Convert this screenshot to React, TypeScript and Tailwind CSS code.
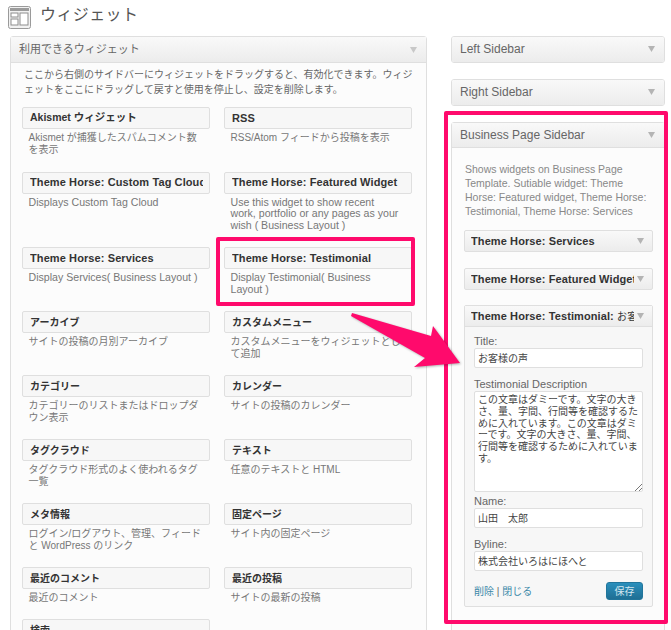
import React from "react";

const FONT = "[font-family:'Liberation_Sans','Noto_Sans_CJK_JP',sans-serif]";

const available: [string, string, number][] = [
  ["Akismet ウィジェット", "Akismet が捕獲したスパムコメント数を表示", 64.5],
  ["RSS", "RSS/Atom フィードから投稿を表示", 64.5],
  ["Theme Horse: Custom Tag Cloud", "Displays Custom Tag Cloud", 75.5],
  ["Theme Horse: Featured Widget", "Use this widget to show recent\nwork, portfolio or any pages as your\nwish ( Business Layout )", 75.5],
  ["Theme Horse: Services", "Display Services( Business Layout )", 64],
  ["Theme Horse: Testimonial", "Display Testimonial( Business\nLayout )", 64],
  ["アーカイブ", "サイトの投稿の月別アーカイブ", 64],
  ["カスタムメニュー", "カスタムメニューをウィジェットとして追加", 64],
  ["カテゴリー", "カテゴリーのリストまたはドロップダウン表示", 64],
  ["カレンダー", "サイトの投稿のカレンダー", 64],
  ["タグクラウド", "タグクラウド形式のよく使われるタグ一覧", 64],
  ["テキスト", "任意のテキストと HTML", 64],
  ["メタ情報", "ログイン/ログアウト、管理、フィードと WordPress のリンク", 64],
  ["固定ページ", "サイト内の固定ページ", 64],
  ["最近のコメント", "最近のコメント", 52],
  ["最近の投稿", "サイトの最新の投稿", 52],
  ["検索", "", 52],
];

const isLatin = (s: string) => /^[\x00-\x7F]+$/.test(s);

function Caret({ className = "text-[#b4b4b4]" }: { className?: string }) {
  return (
    <svg width="7" height="6" viewBox="0 0 7 6" className={className}>
      <path d="M0 0h7L3.500 6z" fill="currentColor" />
    </svg>
  );
}

function SideHeader({ title, open = false }: { title: string; open?: boolean }) {
  return (
    <div
      className={`flex h-[25px] items-center justify-between bg-gradient-to-b from-[#f9f9f9] to-[#ececec] pb-[1px] pl-[8px] pr-[9px] text-[12px] text-[#666] ${
        open ? "border-b border-[#dfdfdf]" : ""
      }`}
    >
      <span>{title}</span>
      <Caret />
    </div>
  );
}

function ClosedWidget({ title }: { title: string }) {
  return (
    <div className="flex h-[22px] items-center justify-between rounded-[2px] border border-[#dfdfdf] bg-gradient-to-b from-[#f9f9f9] to-[#ececec] pl-[6px] pr-[8px]">
      <span className="w-[163px] overflow-hidden whitespace-nowrap text-[11px] font-bold tracking-[0.1px] text-[#333]">{title}</span>
      <Caret />
    </div>
  );
}

function Field({ label, value, className }: { label: string; value: string; className: string }) {
  return (
    <div className={className}>
      <div className="h-[13px] text-[11px] leading-[13px] text-[#666]">{label}</div>
      <div className="flex h-[20px] items-center rounded-[2px] border border-[#dfdfdf] bg-white pl-[3px] text-[10px] text-[#444]">
        {value}
      </div>
    </div>
  );
}

export default function App() {
  return (
    <div className={`relative h-[630px] w-[671px] overflow-hidden bg-white ${FONT}`}>
      <div className="flex h-[36px] items-start pl-[8px] pt-[5px]">
        <svg width="23" height="23" viewBox="0 0 23 23" className="mt-[1px]">
          <rect x="0.5" y="0.500" width="22" height="22" rx="2" fill="#f1f1f1" stroke="#9a9a9a" />
          <rect x="2" y="2" width="19" height="3" fill="#9b9b9b" />
          <rect x="3" y="7" width="7" height="4" fill="#fff" stroke="#8e8e8e" />
          <rect x="3" y="13" width="7" height="6" fill="#fff" stroke="#8e8e8e" />
          <rect x="12" y="7" width="8" height="12" fill="#fff" stroke="#8e8e8e" />
        </svg>
        <h1 className="ml-[9px] text-[16px] font-normal leading-[20px] tracking-[0.4px] text-[#555]">ウィジェット</h1>
      </div>

      <div className="flex items-start pl-[10px]">
        <section className="h-[700px] w-[417px] rounded-[3px] border border-[#dfdfdf] bg-[#fcfcfc]">
          <div className="flex h-[26px] items-center justify-between border-b border-[#dfdfdf] bg-gradient-to-b from-[#f9f9f9] to-[#ececec] pl-[8px] pr-[9px] text-[11px] text-[#666]">
            <span>利用できるウィジェット</span>
            <Caret className="text-[#c8c8c8]" />
          </div>
          <p className="ml-[13px] mt-[4px] h-[30px] w-[392px] text-[10px] leading-[15px] text-[#666]">
            ここから右側のサイドバーにウィジェットをドラッグすると、有効化できます。ウィジェットをここにドラッグして戻すと使用を停止し、設定を削除します。
          </p>
          <div className="ml-[11px] mt-[10px] grid w-[391px] grid-cols-[188px_188px] gap-x-[14px]">
            {available.map(([title, desc, h]) => (
              <div key={title} style={{ height: h }}>
                <div className="flex h-[22px] items-center rounded-[2px] border border-[#dfdfdf] bg-[#f7f7f7] pl-[7px] pr-[6px]">
                  <span
                    className={`block w-full overflow-hidden font-bold whitespace-nowrap text-[#333] ${
                      isLatin(title) ? "text-[11px] tracking-[0.1px]" : /[A-Za-z]/.test(title) ? "text-[10.5px]" : "text-[10px]"
                    }`}
                  >
                    {title}
                  </span>
                </div>
                <p
                  className={`mt-[3px] whitespace-pre-line px-[6.5px] leading-[11.7px] text-[#777] ${
                    isLatin(desc) ? "text-[10.6px]" : "text-[10px]"
                  }`}
                >
                  {desc}
                </p>
              </div>
            ))}
          </div>
        </section>

        <aside className="ml-[24px] w-[214px]">
          <div className="mb-[16px] overflow-hidden rounded-[3px] border border-[#dfdfdf]">
            <SideHeader title="Left Sidebar" />
          </div>
          <div className="mb-[16px] overflow-hidden rounded-[3px] border border-[#dfdfdf]">
            <SideHeader title="Right Sidebar" />
          </div>
          <div className="h-[520px] rounded-[3px] border border-[#dfdfdf] bg-[#fcfcfc]">
            <SideHeader title="Business Page Sidebar" open />
            <p className="ml-[13px] mt-[14px] w-[189px] text-[10.5px] leading-[14px] text-[#888]">
              Shows widgets on Business Page Template. Sutiable widget: Theme Horse: Featured widget, Theme Horse: Testimonial, Theme Horse: Services
            </p>
            <div className="ml-[12px] mt-[12px] w-[189px]">
              <ClosedWidget title="Theme Horse: Services" />
              <div className="mt-[16px]">
                <ClosedWidget title="Theme Horse: Featured Widget" />
              </div>
              <div className="mt-[15px] h-[302px] rounded-[2px] border border-[#dfdfdf] bg-[#f7f7f7]">
                <div className="flex h-[21px] items-center justify-between border-b border-[#dfdfdf] bg-gradient-to-b from-[#f9f9f9] to-[#ececec] pl-[6px] pr-[8px]">
                  <span className="w-[163px] overflow-hidden whitespace-nowrap text-[11px] font-bold tracking-[0.1px] text-[#333]">
                    Theme Horse: Testimonial: <span className="text-[10px] font-normal">お客様の声</span>
                  </span>
                  <Caret />
                </div>
                <div className="px-[9px] pt-[8px]">
                  <Field label="Title:" value="お客様の声" className="" />
                  <div className="mt-[10px] h-[13px] text-[11px] leading-[13px] text-[#666]">Testimonial Description</div>
                  <div className="relative h-[101px] rounded-[2px] border border-[#dfdfdf] bg-white pl-[3px] pr-[1px] pt-[2px] text-[10px] leading-[11.8px] text-[#444]">
                    この文章はダミーです。文字の大きさ、量、字間、行間等を確認するために入れています。この文章はダミーです。文字の大きさ、量、字間、行間等を確認するために入れています。
                    <svg width="8" height="8" viewBox="0 0 8 8" className="absolute bottom-0 right-0 text-[#777]">
                      <path d="M1 8 8 1M5 8l3-3" stroke="currentColor" fill="none" />
                    </svg>
                  </div>
                  <Field label="Name:" value="山田　太郎" className="mt-[3px]" />
                  <Field label="Byline:" value="株式会社いろはにほへと" className="mt-[10px]" />
                  <div className="mt-[11px] flex items-center justify-between">
                    <span className="text-[10px] text-[#3a87a8]">
                      削除 <span className="text-[#666]">|</span> 閉じる
                    </span>
                    <button className="h-[18px] w-[37px] rounded-[3px] border border-[#21759b] bg-gradient-to-b from-[#2a8fbc] to-[#1f6f94] text-[10px] text-[#d5e6ee]">
                      保存
                    </button>
                  </div>
                </div>
              </div>
            </div>
          </div>
        </aside>
      </div>

      {/* Annotation overlays */}
      <div className="absolute left-[216px] top-[237px] h-[69px] w-[199px] rounded-[2px] border-[4px] border-[#ff0a6c]" />
      <div className="absolute left-[444px] top-[111px] h-[513px] w-[224px] rounded-[2px] border-[4px] border-[#ff0a6c]" />
      <svg width="130" height="70" viewBox="340 305 130 70" className="absolute left-[340px] top-[305px] drop-shadow-[1px_1px_1px_rgba(0,0,0,0.3)]">
        <polygon points="352,313 431,336 433,326 460,363 414,367 425,358 351,316" fill="#ff0a6c" />
      </svg>
    </div>
  );
}
